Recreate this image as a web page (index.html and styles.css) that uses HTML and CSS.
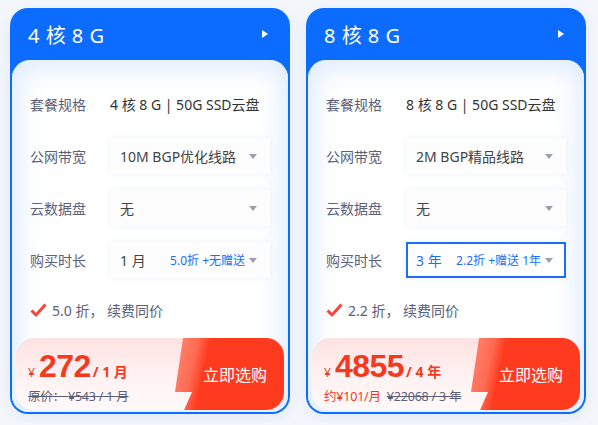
FILE: index.html
```html
<!DOCTYPE html>
<html lang="zh-CN">
<head>
    <meta charset="UTF-8">
    <meta name="viewport" content="width=device-width, initial-scale=1.0">
    <title>云服务器套餐</title>
    <link rel="stylesheet" href="styles.css">
</head>
<body>
    <div class="plans">
        <!-- 4核8G -->
        <div class="plan">
            <div class="plan-head">
                <span class="plan-title">4 核 8 G</span>
                <span class="arrow"></span>
            </div>
            <div class="plan-body">
                <div class="row">
                    <span class="label">套餐规格</span>
                    <span class="spec">4 核 8 G | 50G SSD云盘</span>
                </div>
                <div class="row">
                    <span class="label">公网带宽</span>
                    <div class="select"><span>10M BGP优化线路</span><i class="caret"></i></div>
                </div>
                <div class="row">
                    <span class="label">云数据盘</span>
                    <div class="select"><span>无</span><i class="caret"></i></div>
                </div>
                <div class="row">
                    <span class="label">购买时长</span>
                    <div class="select"><span>1 月</span><span class="extra">5.0折 +无赠送</span><i class="caret"></i></div>
                </div>
                <div class="note">
                    <svg class="check" width="17" height="14" viewBox="0 0 17 14"><path d="M1.5 7.5 L6 12 L15.5 1.5" fill="none" stroke="#f2473a" stroke-width="3" stroke-linejoin="round"/></svg>
                    <span>5.0 折， 续费同价</span>
                </div>
                <div class="price-bar">
                    <div class="price">
                        <div class="now"><span class="yen">¥</span><span class="num">272</span><span class="unit">/ 1 月</span></div>
                        <div class="was"><s>原价： ¥543 / 1 月</s></div>
                    </div>
                    <a class="buy" href="#">立即选购</a>
                </div>
            </div>
        </div>

        <!-- 8核8G -->
        <div class="plan">
            <div class="plan-head">
                <span class="plan-title">8 核 8 G</span>
                <span class="arrow"></span>
            </div>
            <div class="plan-body">
                <div class="row">
                    <span class="label">套餐规格</span>
                    <span class="spec">8 核 8 G | 50G SSD云盘</span>
                </div>
                <div class="row">
                    <span class="label">公网带宽</span>
                    <div class="select"><span>2M BGP精品线路</span><i class="caret"></i></div>
                </div>
                <div class="row">
                    <span class="label">云数据盘</span>
                    <div class="select"><span>无</span><i class="caret"></i></div>
                </div>
                <div class="row">
                    <span class="label">购买时长</span>
                    <div class="select active"><span>3 年</span><span class="extra">2.2折 +赠送 1年</span><i class="caret"></i></div>
                </div>
                <div class="note">
                    <svg class="check" width="17" height="14" viewBox="0 0 17 14"><path d="M1.5 7.5 L6 12 L15.5 1.5" fill="none" stroke="#f2473a" stroke-width="3" stroke-linejoin="round"/></svg>
                    <span>2.2 折， 续费同价</span>
                </div>
                <div class="price-bar">
                    <div class="price">
                        <div class="now"><span class="yen">¥</span><span class="num">4855</span><span class="unit">/ 4 年</span></div>
                        <div class="was"><span class="monthly">约¥101/月</span><s>¥22068 / 3 年</s></div>
                    </div>
                    <a class="buy" href="#">立即选购</a>
                </div>
            </div>
        </div>
    </div>
</body>
</html>
```

FILE: styles.css
```css
/* reset */
* {
    margin: 0;
    padding: 0;
    box-sizing: border-box;
}

body {
    font-family: 'Noto Sans', 'Noto Sans CJK SC', sans-serif;
    background-color: #f3f6fb;
    color: #333;
}

.plans {
    display: flex;
    gap: 16px;
    padding: 8px 10px;
}

.plan {
    width: 280px;
    background: #0b6cff;
    border-radius: 18px;
    padding: 0 2px 2px;
    box-shadow: 0 4px 14px rgba(40, 100, 200, 0.08);
}

.plan-head {
    height: 52px;
    display: flex;
    align-items: center;
    justify-content: space-between;
    padding: 0 20px 0 16px;
    color: #fff;
}

.plan-title {
    font-size: 20px;
    font-weight: 400;
    letter-spacing: 0.5px;
}

.arrow {
    width: 0;
    height: 0;
    border-top: 4px solid transparent;
    border-bottom: 4px solid transparent;
    border-left: 6px solid #fff;
}

.plan-body {
    height: 352px;
    background: #fff;
    border-radius: 18px 18px 16px 16px;
    border-top: 1px solid #e8f2ff;
    box-shadow: inset 0 0 26px 6px rgba(205, 225, 255, 0.7);
    padding: 25px 0 2px;
    display: flex;
    flex-direction: column;
}

.row {
    display: flex;
    align-items: center;
    height: 36px;
    margin: 0 18px 16px;
    font-size: 14px;
}

.label {
    width: 80px;
    color: #5b6178;
}

.spec {
    color: #333;
}

.select {
    width: 160px;
    height: 36px;
    display: flex;
    align-items: center;
    padding: 0 13px 0 10px;
    background: #fdfdfe;
    color: #444;
    box-shadow: 0 0 6px rgba(210, 220, 235, 0.35);
}

.select.active {
    border: 2px solid #1a6dff;
    padding: 0 11px 0 8px;
    color: #1a6dff;
    background: #fff;
}

.extra {
    margin-left: auto;
    font-size: 12px;
    color: #1a6dff;
}

.caret {
    margin-left: auto;
    width: 0;
    height: 0;
    border-left: 4px solid transparent;
    border-right: 4px solid transparent;
    border-top: 5px solid #9aa0ab;
}

.extra + .caret {
    margin-left: 4px;
}

.note {
    display: flex;
    align-items: center;
    gap: 5px;
    height: 20px;
    margin: 6px 18px 0;
    font-size: 14px;
    color: #5b6178;
}

.price-bar {
    display: flex;
    height: 72px;
    margin: 18px 4px 0;
    border-radius: 18px;
    overflow: hidden;
    background: linear-gradient(180deg, #fde2e2 0%, #fff2f2 55%, #fff9f9 100%);
}

.price {
    flex: 1;
    min-width: 0;
    padding: 10px 0 0 12px;
    color: #f5391f;
    white-space: nowrap;
}

.now {
    display: flex;
    align-items: baseline;
    height: 36px;
}

.yen {
    font-size: 12px;
    margin-right: 4px;
}

.num {
    font-family: 'Liberation Sans', sans-serif;
    font-size: 32px;
    font-weight: 700;
    letter-spacing: -0.5px;
}

.unit {
    font-size: 14px;
    font-weight: 700;
    margin-left: 2px;
}

.was {
    font-size: 12.5px;
    letter-spacing: -0.2px;
    color: #5b6178;
    margin-top: 2px;
}

.monthly {
    color: #f5391f;
    margin-right: 6px;
}

.buy {
    flex: none;
    width: 112px;
    display: flex;
    align-items: center;
    justify-content: center;
    padding-left: 14px;
    color: #fff;
    font-size: 16px;
    text-decoration: none;
    background: linear-gradient(102deg, #ffd0c8 0, #ff7c66 12px, #ff6a52 26px, #ff3b1f 38px);
    clip-path: polygon(11px 0, 100% 0, 100% 100%, 12px 100%, 20px 54px, 3px 54px);
}
```
